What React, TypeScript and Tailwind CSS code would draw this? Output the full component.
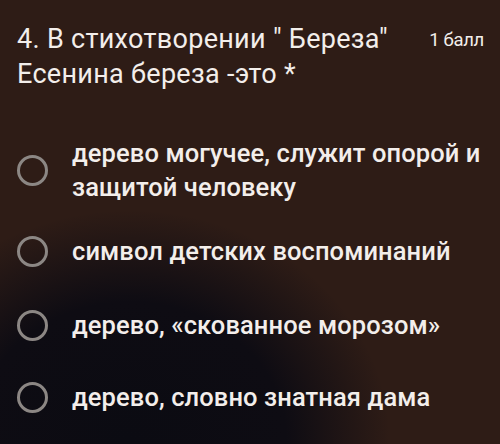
import React from 'react';

const options = [
  { text: 'дерево могучее, служит опорой и защитой человеку', gap: 'mt-0' },
  { text: 'символ детских воспоминаний', gap: 'mt-[30px]' },
  { text: 'дерево, «скованное морозом»', gap: 'mt-[40px]' },
  { text: 'дерево, словно знатная дама', gap: 'mt-[38px]' },
];

const Radio: React.FC = () => (
  <div className="h-[31px] w-[31px] shrink-0 rounded-full border-[3px] border-[#8c8784]" />
);

export default function App() {
  return (
    <div
      className="relative h-[444px] w-[500px] overflow-hidden bg-[#2e1c16] text-[#f3eeeb]"
      style={{ fontFamily: 'Roboto, "Noto Sans", sans-serif' }}
    >
      <div className="pointer-events-none absolute inset-0 bg-[radial-gradient(ellipse_260px_230px_at_130px_440px,#0b0b12_0%,#0e0c13_60%,rgba(30,20,20,0)_100%)]" />
      <div className="relative flex flex-col pl-[17px] pr-[16px] pt-[22px]">
        <div className="flex items-start justify-between">
          <h1 className="text-[27px] leading-[35px] font-normal tracking-[0.3px]">
            4. В стихотворении " Береза"
            <br />
            Есенина береза -это *
          </h1>
          <span className="pt-[6px] text-[18.5px] leading-[24px] tracking-[-0.3px]">1 балл</span>
        </div>
        <div className="mt-[44px] flex flex-col">
          {options.map((o, i) => (
            <div key={i} className={`flex items-center gap-[24px] ${o.gap}`}>
              <Radio />
              <span className="max-w-[412px] text-[25.5px] leading-[34px] font-medium tracking-[0.1px]">
                {o.text}
              </span>
            </div>
          ))}
        </div>
      </div>
    </div>
  );
}
